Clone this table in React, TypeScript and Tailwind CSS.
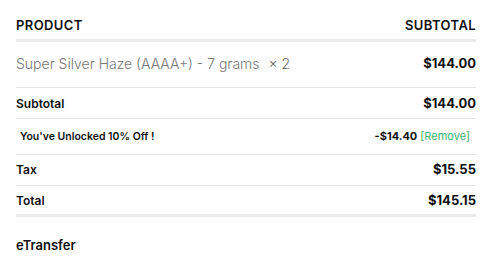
import React from 'react';

const rows = [
  { label: 'Subtotal', value: '$144.00' },
];

const App = () => {
  return (
    <div className="min-h-screen bg-white text-[#111] pl-4 pr-6 pt-[15px]" style={{ fontFamily: 'Inter, "Liberation Sans", sans-serif' }}>
      <table className="w-full border-collapse">
        <thead>
          <tr className="border-b-[3px] border-[#ebebeb]">
            <th className="text-left text-[13px] font-semibold tracking-[0.4px] pb-[4px] leading-[20px]">PRODUCT</th>
            <th className="text-right text-[13px] font-semibold tracking-[0.4px] pb-[4px] leading-[20px]">SUBTOTAL</th>
          </tr>
        </thead>
        <tbody>
          {/* Cart item */}
          <tr className="border-b border-[#e6e6e6]">
            <td className="h-[47px] pb-[2px] text-[14px] font-light text-[#777]">
              Super Silver Haze (AAAA+) - 7 grams<span className="ml-[9px] text-[#666]">×&nbsp;2</span>
            </td>
            <td className="h-[47px] pb-[2px] text-right text-[13px] font-bold">$144.00</td>
          </tr>
          {rows.map(r => (
            <tr key={r.label} className="border-b border-[#e6e6e6]">
              <td className="h-[31px] pt-[2px] text-[12px] font-semibold">{r.label}</td>
              <td className="h-[31px] pt-[2px] text-right text-[13px] font-bold">{r.value}</td>
            </tr>
          ))}
          {/* Coupon */}
          <tr className="border-b border-[#e6e6e6]">
            <td className="h-[36px] pl-1 text-[10.5px] font-semibold">You've Unlocked 10% Off !</td>
            <td className="h-[36px] pr-[6px] text-right text-[11px]">
              <span className="font-bold">-$14.40</span>{' '}
              <span className="text-[#3cb371]">[Remove]</span>
            </td>
          </tr>
          <tr className="border-b border-[#e6e6e6]">
            <td className="h-[31px] text-[12px] font-semibold">Tax</td>
            <td className="h-[31px] text-right text-[13px] font-bold">$15.55</td>
          </tr>
          <tr className="border-b-[3px] border-[#ebebeb]">
            <td className="h-[30px] pt-[1px] text-[12px] font-semibold">Total</td>
            <td className="h-[30px] pt-[1px] text-right text-[13px] font-bold">$145.15</td>
          </tr>
        </tbody>
      </table>
      <div className="mt-[19px] text-[13px] font-semibold">eTransfer</div>
    </div>
  );
};

export default App;
